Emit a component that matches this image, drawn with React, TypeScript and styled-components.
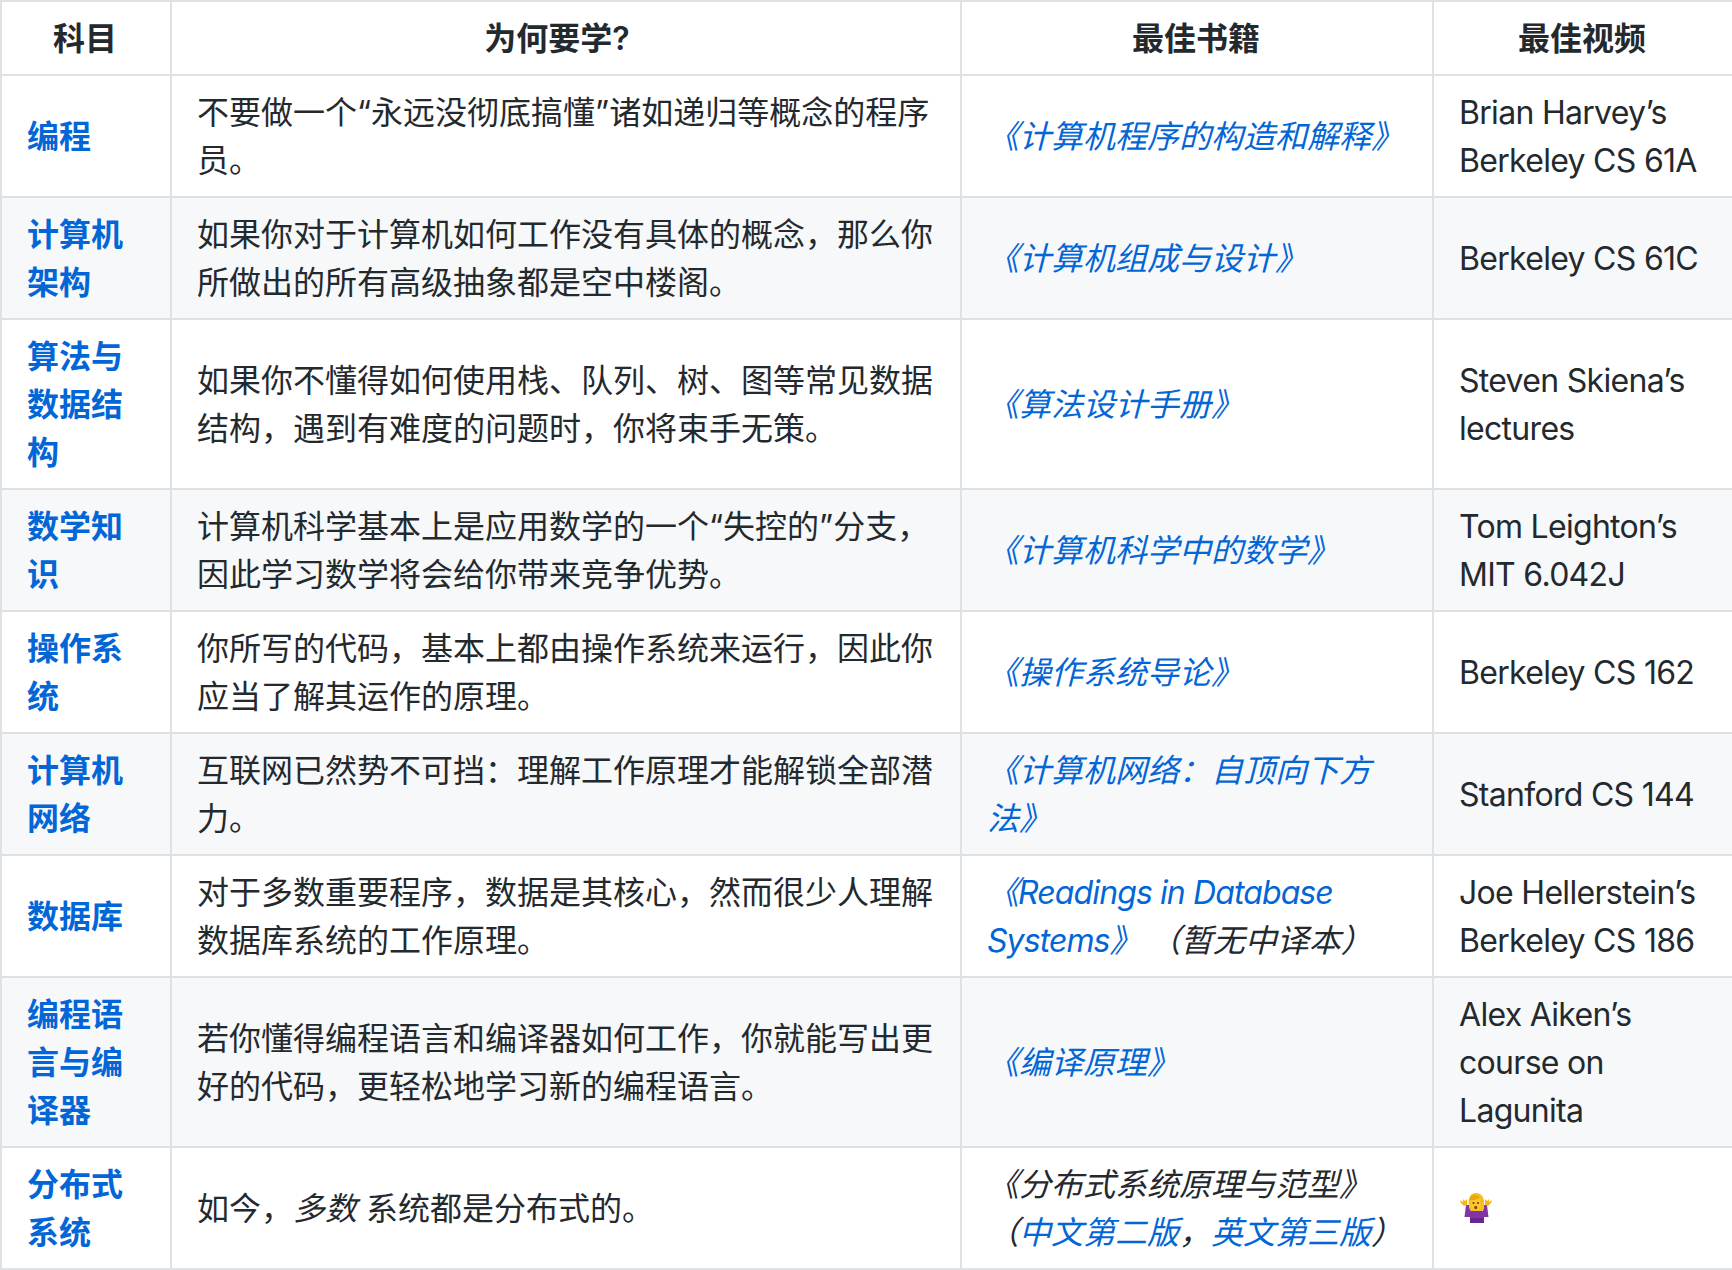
import React from "react";
import styled, { createGlobalStyle } from "styled-components";

const Global = createGlobalStyle`
  html, body { margin: 0; padding: 0; background: #fff; }
  body {
    font-family: Inter, "Noto Sans CJK SC", sans-serif;
    font-size: 32px;
    line-height: 48px;
    color: #24292e;
  }
`;

const Table = styled.table`
  border-collapse: collapse;
  table-layout: fixed;
  width: 1732px;
`;

const Col = styled.col<{ $w: number }>`
  width: ${(p) => p.$w}px;
`;

const Row = styled.tr<{ $striped?: boolean }>`
  background: ${(p) => (p.$striped ? "#f6f8fa" : "#fff")};
`;

const Th = styled.th<{ $trail?: number }>`
  border: 2px solid #dfe2e5;
  padding: 13px ${(p) => 27 + (p.$trail ?? 0)}px 11px 25px;
  font-weight: 600;
  text-align: center;
`;

const Td = styled.td`
  border: 2px solid #dfe2e5;
  padding: 13px 27px 11px 25px;
`;

const VideoCell = styled(Td)`
  letter-spacing: -0.7px;
`;

const SubjectLink = styled.a`
  color: #0366d6;
  font-weight: 600;
  text-decoration: none;
`;

const BookLink = styled.a`
  color: #0366d6;
  text-decoration: none;
`;

const LatinBookLink = styled(BookLink)`
  letter-spacing: -0.9px;
`;

const Note = styled.span`
  margin-left: 24px;
`;

const Em = styled.em`
  font-style: italic;
`;

const EmojiIcon = styled.svg`
  display: inline-block;
  width: 34px;
  height: 32px;
  vertical-align: -4px;
`;

const Shrug = () => (
  <EmojiIcon viewBox="0 0 34 32" role="img" aria-label="🤷‍♀️">
    <path d="M7 13 L5.5 25 L11 25 L11 31 L25 31 L25 25 L29.5 25 L28 13 L25 13 L24 19 L21 18 L15 18 L12 19 L10 13Z" fill="#8233a6" />
    <path d="M11 26 h14 v5 h-14z" fill="#6a2590" />
    <path d="M16 1 C10 2 9 8 10 14 C10 18 12 19 14 19 L22 19 C26 18 25 15 25 12 C26 6 22 0 16 1Z" fill="#f6c11d" />
    <ellipse cx="16.5" cy="12" rx="5" ry="6" fill="#fdc92f" />
    <path d="M11 8 C15 9 19 7 21 5 C23 8 24 10 23 12 C23 6 20 3 16 3 C12 3 10 6 11 8Z" fill="#e8a80d" />
    <circle cx="14.5" cy="11" r="1" fill="#5b3a12" />
    <circle cx="19" cy="11" r="1" fill="#5b3a12" />
    <ellipse cx="16.7" cy="15.5" rx="1.5" ry="1.8" fill="#8a3d12" />
    <path d="M1 8 L4 10 L4 7 L6 9 L8 7 L8 13 L5 14 L2 11Z" fill="#f9b80e" />
    <path d="M33 8 L30 10 L30 7 L28 9 L26 7 L26 13 L29 14 L32 11Z" fill="#f9b80e" />
  </EmojiIcon>
);

type RowData = {
  subject: string;
  why: React.ReactNode;
  book: React.ReactNode;
  video: React.ReactNode;
};

const rows: RowData[] = [
  {
    subject: "编程",
    why: "不要做一个“永远没彻底搞懂”诸如递归等概念的程序员。",
    book: <Em><BookLink href="#">《计算机程序的构造和解释》</BookLink></Em>,
    video: "Brian Harvey’s Berkeley CS 61A",
  },
  {
    subject: "计算机架构",
    why: "如果你对于计算机如何工作没有具体的概念，那么你所做出的所有高级抽象都是空中楼阁。",
    book: <Em><BookLink href="#">《计算机组成与设计》</BookLink></Em>,
    video: "Berkeley CS 61C",
  },
  {
    subject: "算法与数据结构",
    why: "如果你不懂得如何使用栈、队列、树、图等常见数据结构，遇到有难度的问题时，你将束手无策。",
    book: <Em><BookLink href="#">《算法设计手册》</BookLink></Em>,
    video: "Steven Skiena’s lectures",
  },
  {
    subject: "数学知识",
    why: "计算机科学基本上是应用数学的一个“失控的”分支，因此学习数学将会给你带来竞争优势。",
    book: <Em><BookLink href="#">《计算机科学中的数学》</BookLink></Em>,
    video: "Tom Leighton’s MIT 6.042J",
  },
  {
    subject: "操作系统",
    why: "你所写的代码，基本上都由操作系统来运行，因此你应当了解其运作的原理。",
    book: <Em><BookLink href="#">《操作系统导论》</BookLink></Em>,
    video: "Berkeley CS 162",
  },
  {
    subject: "计算机网络",
    why: "互联网已然势不可挡：理解工作原理才能解锁全部潜力。",
    book: <Em><BookLink href="#">《计算机网络：自顶向下方法》</BookLink></Em>,
    video: "Stanford CS 144",
  },
  {
    subject: "数据库",
    why: "对于多数重要程序，数据是其核心，然而很少人理解数据库系统的工作原理。",
    book: <Em><LatinBookLink href="#">《Readings in Database Systems》</LatinBookLink><Note>（暂无中译本）</Note></Em>,
    video: "Joe Hellerstein’s Berkeley CS 186",
  },
  {
    subject: "编程语言与编译器",
    why: "若你懂得编程语言和编译器如何工作，你就能写出更好的代码，更轻松地学习新的编程语言。",
    book: <Em><BookLink href="#">《编译原理》</BookLink></Em>,
    video: "Alex Aiken’s course on Lagunita",
  },
  {
    subject: "分布式系统",
    why: <>如今，<Em>多数</Em> 系统都是分布式的。</>,
    book: <Em>《分布式系统原理与范型》（<BookLink href="#">中文第二版</BookLink>，<BookLink href="#">英文第三版</BookLink>）</Em>,
    video: <Shrug />,
  },
];

export default function App() {
  return (
    <>
      <Global />
      <Table>
        <colgroup>
          <Col $w={170} />
          <Col $w={790} />
          <Col $w={472} />
          <Col $w={300} />
        </colgroup>
        <thead>
          <Row>
            <Th>科目</Th>
            <Th $trail={16}>为何要学?</Th>
            <Th>最佳书籍</Th>
            <Th>最佳视频</Th>
          </Row>
        </thead>
        <tbody>
          {rows.map((r, i) => (
            <Row key={r.subject} $striped={i % 2 === 1}>
              <Td><SubjectLink href="#">{r.subject}</SubjectLink></Td>
              <Td>{r.why}</Td>
              <Td>{r.book}</Td>
              <VideoCell>{r.video}</VideoCell>
            </Row>
          ))}
        </tbody>
      </Table>
    </>
  );
}
